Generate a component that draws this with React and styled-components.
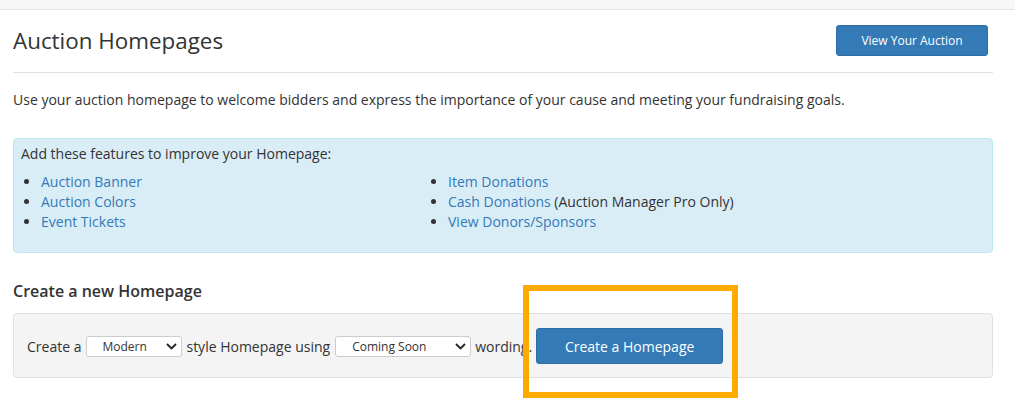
import styled, { createGlobalStyle } from "styled-components";

const GlobalStyle = createGlobalStyle`
  body {
    margin: 0;
    background: #fff;
    font-family: "Open Sans", "Liberation Sans", sans-serif;
    font-size: 14px;
    color: #333;
  }
`;

const features = [
  [{ label: "Auction Banner" }, { label: "Auction Colors" }, { label: "Event Tickets" }],
  [
    { label: "Item Donations" },
    { label: "Cash Donations", note: " (Auction Manager Pro Only)" },
    { label: "View Donors/Sponsors" },
  ],
];

const Chevron = () => (
  <svg width="11" height="7" viewBox="0 0 11 7">
    <path d="M1 1l4.5 4.5L10 1" fill="none" stroke="#222" strokeWidth="1.8" />
  </svg>
);

const Dropdown = ({ className, options }) => (
  <span className={className}>
    <select defaultValue={options[0]}>
      {options.map((o) => (
        <option key={o}>{o}</option>
      ))}
    </select>
    <span className="arrow">
      <Chevron />
    </span>
  </span>
);

const StyledDropdown = styled(Dropdown)`
  position: relative;
  display: inline-flex;
  margin: 0 4px 0 5px;

  select {
    appearance: none;
    width: ${(p) => p.width}px;
    height: 21px;
    box-sizing: border-box;
    border: 1px solid #ccc;
    border-radius: 3px;
    background: #fff;
    padding: 0 0 0 ${(p) => p.indent}px;
    font-family: "Open Sans", sans-serif;
    font-size: 12px;
    color: #333;
  }

  .arrow {
    position: absolute;
    right: 5px;
    top: 7px;
    display: flex;
    pointer-events: none;
  }
`;

const PageContainer = ({ className }) => (
  <div className={className}>
    <GlobalStyle />
    <div className="top-bar" />
    <div className="content">
      <div className="header">
        <h1>Auction Homepages</h1>
        <Button $small>View Your Auction</Button>
      </div>

      <p className="intro">
        Use your auction homepage to welcome bidders and express the importance of your cause and
        meeting your fundraising goals.
      </p>

      <div className="info">
        <div>Add these features to improve your Homepage:</div>
        <div className="columns">
          {features.map((col, i) => (
            <ul key={i}>
              {col.map((f) => (
                <li key={f.label}>
                  <a href="#">{f.label}</a>
                  {f.note}
                </li>
              ))}
            </ul>
          ))}
        </div>
      </div>

      <h2>Create a new Homepage</h2>
      <div className="well">
        Create a
        <StyledDropdown width={96} indent={15} options={["Modern", "Classic"]} />
        style Homepage using
        <StyledDropdown width={136} indent={16} options={["Coming Soon", "Now Open"]} />
        wording.
        <Button $wide>Create a Homepage</Button>
      </div>
    </div>
    <div className="highlight" />
  </div>
);

const Button = styled.button`
  font-family: "Open Sans", sans-serif;
  font-size: ${(p) => (p.$small ? "12px" : "14px")};
  color: #fff;
  background: #337ab7;
  border: 1px solid #2e6da4;
  border-radius: 3px;
  width: ${(p) => (p.$small ? "152px" : "187px")};
  height: ${(p) => (p.$small ? "31px" : "36px")};
  margin-left: ${(p) => (p.$wide ? "4px" : "0")};
  padding: 0;
  cursor: pointer;
`;

const Page = styled(PageContainer)`
  position: relative;
  height: 400px;
  overflow: hidden;

  .top-bar {
    height: 9px;
    background: #f7f7f7;
    border-bottom: 1px solid #e4e4e4;
  }

  .content {
    padding: 0 22px 0 13px;
  }

  .header {
    display: flex;
    align-items: center;
    justify-content: space-between;
    padding: 15px 5px 16px 0;
    border-bottom: 1px solid #e0e0e0;
  }

  h1 {
    margin: 0;
    font-size: 22.4px;
    font-weight: 400;
    color: #333;
  }

  .intro {
    margin: 17px 0 28px;
    line-height: 20px;
  }

  .info {
    background: #d9edf7;
    border: 1px solid #bce8f1;
    border-radius: 4px;
    padding: 5px 7px 20px;
    line-height: 20px;
  }

  .columns {
    display: grid;
    grid-template-columns: 407px 1fr;
    margin-top: 8px;
  }

  ul {
    margin: 0;
    padding-left: 20px;
  }

  a {
    color: #337ab7;
    text-decoration: none;
  }

  h2 {
    margin: 27px 0 11px;
    font-size: 16px;
    font-weight: 600;
    line-height: 22px;
  }

  .well {
    display: flex;
    align-items: center;
    background: #f4f4f4;
    border: 1px solid #e0e0e0;
    border-radius: 4px;
    padding: 14px 13px 13px;
    white-space: nowrap;
  }

  .highlight {
    position: absolute;
    left: 523px;
    top: 285px;
    width: 215px;
    height: 113px;
    box-sizing: border-box;
    border: 6px solid #ffaa00;
    pointer-events: none;
  }
`;

export default function App() {
  return <Page />;
}
